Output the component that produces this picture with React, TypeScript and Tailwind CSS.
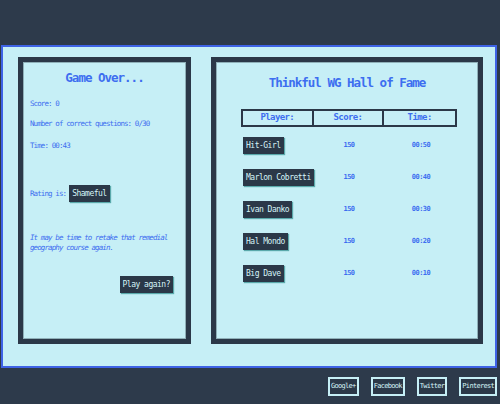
const mono = { fontFamily: '"DejaVu Sans Mono", "Liberation Mono", monospace' }

const SCORES = [
  { name: 'Hit-Girl', score: 150, time: '00:50' },
  { name: 'Marlon Cobretti', score: 150, time: '00:40' },
  { name: 'Ivan Danko', score: 150, time: '00:30' },
  { name: 'Hal Mondo', score: 150, time: '00:20' },
  { name: 'Big Dave', score: 150, time: '00:10' },
]

function Badge({ children }: { children: React.ReactNode }) {
  return (
    <span className="inline-flex h-[17px] items-center whitespace-nowrap bg-[#2b3848] px-[3px] text-[8px] font-normal tracking-[-0.5px] text-[#d6f4f8] shadow-[1px_1px_1px_#5aa9ab]">
      {children}
    </span>
  )
}

export default function App() {
  return (
    <div className="h-[404px] w-[500px] overflow-hidden bg-[#2d3a4b]" style={mono}>
      <div className="h-[45px]" />
      <div className="ml-[1px] flex h-[323px] w-[496px] gap-[20px] border-2 border-[#3e63e6] bg-[#c6eff6] pl-[15px] pt-[10px]">
        {/* Game over card */}
        <div className="flex h-[287px] w-[173px] flex-col border-[5px] border-[#2b3848] px-[7px] text-[#3d6ef0] shadow-[inset_0_0_0_1px_#8fb0b8]">
          <h1 className="mt-[8px] text-center text-[12.5px] font-bold leading-[15px] tracking-[-1px]">Game Over...</h1>
          <div className="mt-[14px] text-[7.5px] leading-[10px] tracking-[-0.9px]">
            <p>Score: 0</p>
            <p className="mt-[10px]">Number of correct questions: 0/30</p>
            <p className="mt-[12px]">Time: 00:43</p>
            <div className="mt-[34px] flex items-center gap-[3px]">
              <span>Rating is:</span>
              <Badge>Shameful</Badge>
            </div>
            <p className="mt-[31px] italic leading-[10px]">
              It may be time to retake that remedial geography course again.
            </p>
            <div className="mt-[23px] flex justify-end pr-[6px]">
              <Badge>Play again?</Badge>
            </div>
          </div>
        </div>

        {/* Hall of fame card */}
        <div className="flex h-[287px] w-[272px] flex-col border-[5px] border-[#2b3848] text-[#3d6ef0] shadow-[inset_0_0_0_1px_#8fb0b8]">
          <h1 className="mt-[13px] text-center text-[12.5px] font-bold leading-[15px] tracking-[-1px]">Thinkful WG Hall of Fame</h1>
          <div className="ml-[25px] mt-[19px] w-[216px]">
            <div className="grid h-[18px] grid-cols-3 border-2 border-[#2b3848] text-[9px] font-bold tracking-[-0.6px]">
              <div className="flex items-center justify-center border-r-2 border-[#2b3848]">Player:</div>
              <div className="flex items-center justify-center border-r-2 border-[#2b3848]">Score:</div>
              <div className="flex items-center justify-center">Time:</div>
            </div>
            <div className="mt-[10px] flex flex-col gap-[15px]">
              {SCORES.map((s) => (
                <div key={s.name} className="grid h-[17px] grid-cols-3 items-center text-[7px] font-bold tracking-[-0.5px]">
                  <div className="pl-[2px]">
                    <Badge>{s.name}</Badge>
                  </div>
                  <div className="text-center">{s.score}</div>
                  <div className="text-center">{s.time}</div>
                </div>
              ))}
            </div>
          </div>
        </div>
      </div>

      <div className="flex h-[36px] items-center justify-end gap-[12px] pr-[3px]">
        {['Google+', 'Facebook', 'Twitter', 'Pinterest'].map((n) => (
          <span
            key={n}
            className="flex h-[19px] items-center border-2 border-[#c6eff6] bg-[#2b3848] px-[1px] text-[7px] tracking-[-0.7px] text-[#d6f4f8]"
          >
            {n}
          </span>
        ))}
      </div>
    </div>
  )
}
